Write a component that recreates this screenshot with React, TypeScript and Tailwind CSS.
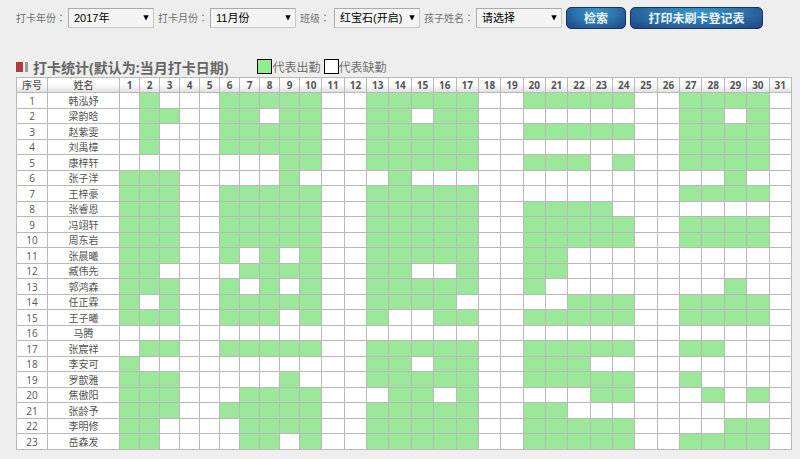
import type { ReactNode } from 'react';

const DAYS = Array.from({ length: 31 }, (_, i) => i + 1);

// name, attended days
const STUDENTS: [string, string][] = [
  ['韩泓妤', '2,6-10,13-17,20-24,27-30'],
  ['梁韵晗', '2-3,6-7,9-10,13-14,16-17,27-28,30'],
  ['赵紫雯', '2,6-10,13-17,20-24,27-30'],
  ['刘禹樟', '2,6-10,13-17,27-30'],
  ['康梓轩', '9-10,13-17,20-22,24,27-30'],
  ['张子洋', '1-3,9,14,29'],
  ['王梓豪', '1-3,6-10,13-17,27-30'],
  ['张睿恩', '1-3,6-10,13-17,20-23'],
  ['冯翊轩', '1-3,6-10,13-17,20-24,27-30'],
  ['周东岩', '1-3,6-10,13-17,20-24,27-30'],
  ['张晨曦', '1-3,6,8,10,13-17,20-21'],
  ['臧伟先', '1-2,7-10,13-14,17,20-21'],
  ['郭鸿森', '1-3,6,8,10,13-17,20,29'],
  ['任正霖', '1,3,6-10,13-16,22-24,27-30'],
  ['王子曦', '1-3,6-8,10,13,16-17,20-24,27-30'],
  ['马腾', ''],
  ['张宸祥', '2-3,6-10,13-17,20-24,27-28'],
  ['李安可', '1,13-14,16-17,20-22'],
  ['罗歆雅', '1-3,9,13-17,20-24,27'],
  ['焦傲阳', '1-3,7-10,14-15,17,23-24,28,30'],
  ['张龄予', '1-3,6-10,13-17,20-21'],
  ['李明修', '1-2,7-10,13-17,20-24,29-30'],
  ['岳森发', '1-2,7-8,10,13-17,20-24,27-30'],
];

function attended(ranges: string, day: number) {
  return ranges.split(',').some((part) => {
    const [from, to = from] = part.split('-');
    return part !== '' && day >= Number(from) && day <= Number(to);
  });
}

function Filter({ id, label, options }: { id: string; label: string; options: string[] }) {
  return (
    <div className="flex items-center">
      <label htmlFor={id} className="mr-[2px] min-w-8 text-[10px] whitespace-nowrap text-[#707070]">
        {label}
        <span className="font-['Noto_Sans_CJK_TC',sans-serif]">：</span>
      </label>
      <div className="relative">
        <select
          id={id}
          className="block h-5 w-[86px] appearance-none border border-[#c8c8c8] border-t-[#aaa] border-l-[#aaa] bg-[#f4f4f4] pl-[5px] font-['Liberation_Sans','Noto_Sans_CJK_SC',sans-serif] text-[11px] leading-4 text-black"
        >
          {options.map((o) => (
            <option key={o}>{o}</option>
          ))}
        </select>
        <svg viewBox="0 0 6 6" className="pointer-events-none absolute top-[7px] right-[5px] size-[6px]">
          <path d="M0.3 0.3h5.4L3 5.5z" fill="#000" />
        </svg>
      </div>
    </div>
  );
}

function ActionButton({ children, className }: { children: ReactNode; className: string }) {
  return (
    <button
      type="button"
      className={`${className} h-[22px] rounded-[5px] border border-[#1c2f5e] bg-[radial-gradient(ellipse_at_50%_20%,#3498cc_0%,#2b72ab_50%,#1f4482_100%)] pt-px text-[12px] leading-5 font-bold whitespace-nowrap text-[#eef4fa]`}
    >
      {children}
    </button>
  );
}

export default function App() {
  return (
    <div className="min-h-screen bg-[#eee] pt-[7px] pr-2 pb-[10px] pl-4 font-['Open_Sans','Noto_Sans_CJK_SC',sans-serif]">
      <form className="flex items-center gap-1" onSubmit={(e) => e.preventDefault()}>
        <Filter id="year" label="打卡年份" options={['2017年']} />
        <Filter id="month" label="打卡月份" options={['11月份']} />
        <Filter id="class" label="班级" options={['红宝石(开启)']} />
        <Filter id="child" label="孩子姓名" options={['请选择']} />
        <ActionButton className="w-[60px]">检索</ActionButton>
        <ActionButton className="w-[133px]">打印未刷卡登记表</ActionButton>
      </form>

      <div className="mt-7 flex h-5 items-center text-[#666]">
        <span className="h-[10px] w-[7px] bg-[#b03a3e]" />
        <span className="ml-[2px] h-[10px] w-[3px] bg-[#999]" />
        <h1 className="ml-[5px] pt-px text-[14px] leading-5 font-bold">打卡统计(默认为:当月打卡日期)</h1>
        <div className="ml-[29px] flex items-end text-[12px] leading-4 text-[#707070]">
          <span className="mb-[2px] size-[15px] border border-black bg-[#90ee90]" />
          代表出勤
          <span className="mb-[2px] ml-[3px] size-[15px] border border-black bg-white" />
          代表缺勤
        </div>
      </div>

      <table className="w-full table-fixed border-collapse bg-white text-center text-[10px] leading-[14px] text-[#555]">
        <colgroup>
          <col className="w-[31px]" />
          <col className="w-[72px]" />
          {DAYS.map((d) => (
            <col key={d} className={d < 10 ? 'w-[20px]' : ''} />
          ))}
        </colgroup>
        <thead>
          <tr className="h-[15px] bg-linear-to-b from-white from-40% to-[#ddd]">
            <th className="border border-[#b8b8b8] p-0 font-medium">序号</th>
            <th className="border border-[#b8b8b8] p-0 font-medium">姓名</th>
            {DAYS.map((d) => (
              <th key={d} className="border border-[#b8b8b8] p-0 font-bold">
                {d}
              </th>
            ))}
          </tr>
        </thead>
        <tbody>
          {STUDENTS.map(([name, ranges], i) => (
            <tr key={name} className="odd:h-[16px] even:h-[15px]">
              <td className="border border-[#b8b8b8] p-0">{i + 1}</td>
              <td className="border border-[#b8b8b8] p-0">{name}</td>
              {DAYS.map((d) => (
                <td
                  key={d}
                  className={`border border-[#b8b8b8] p-0 ${attended(ranges, d) ? 'bg-[#9be89b]' : ''}`}
                />
              ))}
            </tr>
          ))}
        </tbody>
      </table>
    </div>
  );
}
